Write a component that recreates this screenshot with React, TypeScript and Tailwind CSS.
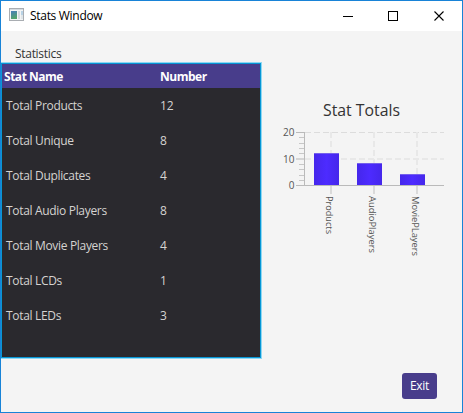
import React from 'react';

const stats: [string, number][] = [
  ['Total Products', 12],
  ['Total Unique', 8],
  ['Total Duplicates', 4],
  ['Total Audio Players', 8],
  ['Total Movie Players', 4],
  ['Total LCDs', 1],
  ['Total LEDs', 3],
];

const bars = [
  { label: 'Products', x: 314, y: 153, length: 38 },
  { label: 'AudioPlayers', x: 357, y: 163, length: 57 },
  { label: 'MoviePLayers', x: 400, y: 174, length: 60 },
];

const minorTicks = [137, 143, 148, 153, 164, 169, 175, 180];

function TitleBar() {
  return (
    <header className="flex h-[30px] shrink-0 items-center bg-white text-black">
      <svg className="mb-[3px] ml-2 h-[13px] w-[15px]" viewBox="0 0 15 13" shapeRendering="crispEdges">
        <defs>
          <linearGradient id="pane" x1="0" y1="0" x2="0.3" y2="1">
            <stop offset="0" stopColor="#477dbc" />
            <stop offset="1" stopColor="#52a36b" />
          </linearGradient>
        </defs>
        <rect x="0.5" y="0.5" width="14" height="12" fill="#f2f4f5" stroke="#a9adb2" />
        <rect x="1" y="1" width="13" height="1" fill="#d5dbe0" />
        <rect x="2" y="3" width="6" height="8" fill="url(#pane)" />
        <rect x="9" y="3" width="2" height="8" fill="#d4d9de" />
        <rect x="12" y="3" width="2" height="4" fill="#b8d2e5" />
        <rect x="12" y="7" width="2" height="4" fill="#dfe5e8" />
      </svg>
      <span className="ml-1.5 tracking-[-0.3px]">Stats Window</span>
      <svg className="ml-auto mr-[17px] h-[10px] w-[102px]" viewBox="0 0 102 10" fill="none" stroke="black">
        <path d="M0 5.5h10M45.5.5h9v9h-9z" shapeRendering="crispEdges" />
        <path d="M91.5.5l9 9M100.5.5l-9 9" strokeWidth="1.1" />
      </svg>
    </header>
  );
}

function StatsTable() {
  return (
    <section className="h-[297px] w-[261px] border-y border-r border-[#8ed8f3] bg-[#2a292e]">
      <div className="h-full border border-[#0796d5]">
        <div className="flex h-6 items-center bg-[#483d8b] pl-[2px] pt-[2px] font-bold tracking-[-0.48px] text-white">
          <span className="w-[156px]">Stat Name</span>
          <span>Number</span>
        </div>
        {stats.map(([name, value]) => (
          <div key={name} className="flex h-[35px] items-center pl-1 text-[#d5d3d1]">
            <span className="w-[154px] tracking-[-0.32px]">{name}</span>
            <span>{value}</span>
          </div>
        ))}
      </div>
    </section>
  );
}

function StatChart() {
  return (
    <svg className="h-[180px] w-[180px]" viewBox="275 95 180 180">
      <defs>
        <linearGradient id="bar">
          <stop offset="0" stopColor="#4527eb" />
          <stop offset="0.5" stopColor="#4d2bff" />
          <stop offset="1" stopColor="#4527eb" />
        </linearGradient>
      </defs>
      <text x="323" y="116" fontSize="16.5" fill="#333333" textLength="77" lengthAdjust="spacingAndGlyphs">Stat Totals</text>
      <g shapeRendering="crispEdges">
        <path d="M305 132.5H444" stroke="#dcdcdc" strokeDasharray="6 3" />
        <path d="M305 159H444" stroke="#e8e8e8" strokeWidth="2" strokeDasharray="6 3" />
        {bars.map((bar) => (
          <g key={bar.label}>
            <path d={`M${bar.x + 17} 132V185`} stroke="#e8e8e8" strokeWidth="2" strokeDasharray="6 3" />
            <path d={`M${bar.x + 17} 185V194`} stroke="#dadada" strokeWidth="2" />
            <rect x={bar.x} y={bar.y} width="25" height={185 - bar.y} fill="url(#bar)" />
            <rect x={bar.x} y={bar.y} width="25" height="1" fill="#7560ec" />
          </g>
        ))}
        <path d="M304.5 132V186M296 185.5H444M296 132.5H304" stroke="#bababa" />
        <path d="M296 159H304" stroke="#d5d5d5" strokeWidth="2" />
        {minorTicks.map((y) => <path key={y} d={`M299 ${y + 0.5}H304`} stroke="#c7c7c7" />)}
      </g>
      <g fill="#555555" fontSize="10" textAnchor="end">
        <text x="294.5" y="136">20</text>
        <text x="294.5" y="163">10</text>
        <text x="294.5" y="189">0</text>
      </g>
      <g fill="#555555" fontSize="9.5">
        {bars.map((bar) => (
          <text key={bar.label} transform={`translate(${bar.x + 12} 196) rotate(90)`} textLength={bar.length} lengthAdjust="spacingAndGlyphs">
            {bar.label}
          </text>
        ))}
      </g>
    </svg>
  );
}

export default function App() {
  return (
    <div className="flex h-[413px] w-[463px] flex-col border border-[#1883d7] bg-[#f4f4f4] font-['Open_Sans','Noto_Sans',sans-serif] text-xs">
      <TitleBar />
      <main className="flex min-h-0 flex-1">
        <div className="w-[261px]">
          <div className="h-[31px] pl-[14px] pt-[15px] tracking-[-0.3px] text-[#333333]">Statistics</div>
          <StatsTable />
        </div>
        <div className="flex flex-1 flex-col pl-[13px] pt-16">
          <StatChart />
          <button className="ml-[127px] mt-[98px] flex h-[26px] w-[35px] items-center justify-center rounded-[3px] bg-[#483d8b] tracking-[-0.3px] text-white">
            Exit
          </button>
        </div>
      </main>
    </div>
  );
}
